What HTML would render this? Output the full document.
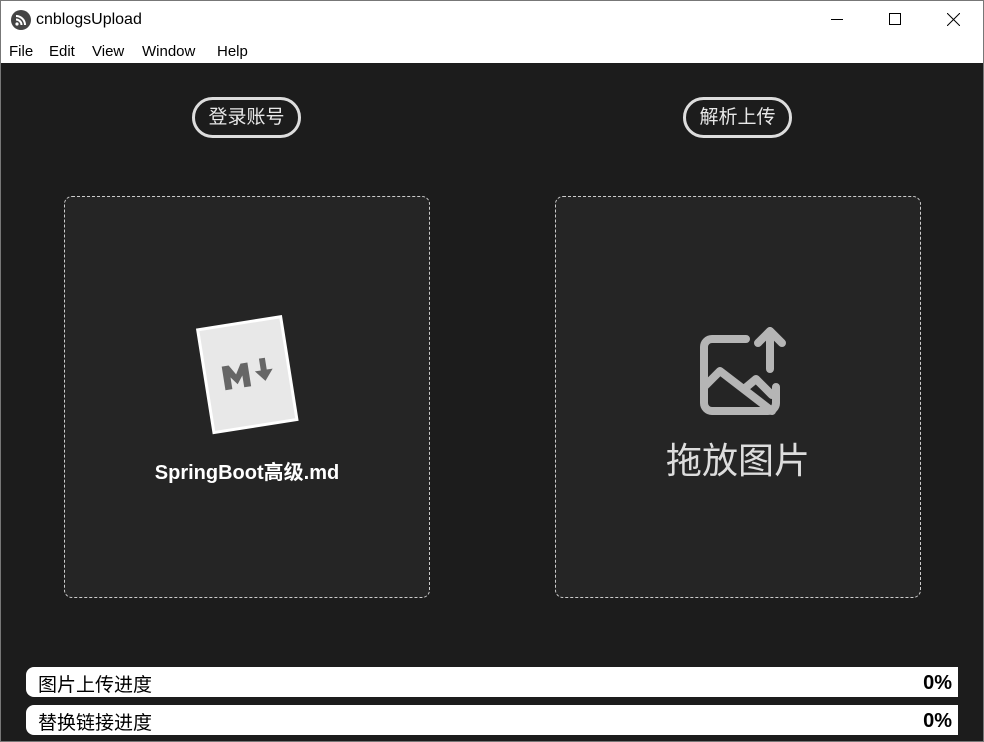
<!DOCTYPE html>
<html><head><meta charset="utf-8"><style>
*{margin:0;padding:0;box-sizing:border-box}
body{width:984px;height:742px;overflow:hidden;background:#1c1c1c;font-family:"Liberation Sans","Noto Sans CJK SC",sans-serif;position:relative}
.win{position:absolute;inset:0;border:1px solid #777}
.title{position:absolute;left:0;top:0;width:984px;height:38px;background:#fff;border:1px solid #777;border-bottom:none}
.title .t{position:absolute;left:35px;top:10px;font-size:16px;color:#000}
.menu{position:absolute;left:0;top:38px;width:984px;height:25px;background:#fff;border-left:1px solid #777;border-right:1px solid #777;font-size:15px}
.menu span{position:absolute;top:5px;color:#000}
.btn{position:absolute;top:97px;height:41px;border:3px solid #ddd;border-radius:21px;color:#e8e8e8;font-size:19px;line-height:35px;text-align:center}
.box{position:absolute;top:196px;width:366px;height:402px;background:#252525;border:1px dashed #ccc;border-radius:8px}
.bar{position:absolute;left:26px;width:932px;height:30px;background:#fff;border-radius:8px 0 0 8px;font-size:19px;color:#000}
.bar .l{position:absolute;left:12px;top:3px}
.bar .r{position:absolute;right:6px;top:5px;font-weight:bold;font-size:20px}
</style></head><body>
<div class="title">
<svg style="position:absolute;left:10px;top:9px" width="20" height="20" viewBox="0 0 20 20"><circle cx="10" cy="10" r="10" fill="#444"/><path d="M5 6a9 9 0 0 1 9 9M5 9.5a5.5 5.5 0 0 1 5.5 5.5" stroke="#fff" stroke-width="2" fill="none"/><circle cx="6" cy="14" r="1.6" fill="#fff"/></svg>
<span class="t">cnblogsUpload</span>
<svg style="position:absolute;left:830px;top:18px" width="12" height="2"><rect width="12" height="1" fill="#000"/></svg>
<svg style="position:absolute;left:888px;top:12px" width="12" height="12"><rect x=".5" y=".5" width="11" height="11" fill="none" stroke="#000"/></svg>
<svg style="position:absolute;left:946px;top:12px" width="13" height="13"><path d="M0 0L13 13M13 0L0 13" stroke="#000"/></svg>
</div>
<div class="menu"><span style="left:8px">File</span><span style="left:48px">Edit</span><span style="left:91px">View</span><span style="left:141px">Window</span><span style="left:216px">Help</span></div>
<div class="btn" style="left:192px;width:109px">登录账号</div>
<div class="btn" style="left:683px;width:109px">解析上传</div>
<div class="box" style="left:64px">
<svg style="position:absolute;left:128px;top:118px" width="110" height="122" viewBox="0 0 110 122">
<g transform="rotate(-9 52 58)"><rect x="12" y="8" width="84" height="104" fill="#e8e8e8" stroke="#fff" stroke-width="3"/>
<path d="M30 72V48h7l6 10 6-10h7v24h-7V60l-6 8-6-8v12z" fill="#666"/>
<path d="M68 46h6v12h6l-9 11-9-11h6z" fill="#666"/></g></svg>
<div style="position:absolute;left:0;width:100%;top:259px;text-align:center;color:#fff;font-size:20px;font-weight:600">SpringBoot高级.md</div>
</div>
<div class="box" style="left:555px">
<svg style="position:absolute;left:138px;top:126px" width="94" height="92" viewBox="0 0 94 92">
<g fill="none" stroke="#b5b5b5" stroke-width="8" stroke-linecap="round" stroke-linejoin="round">
<path d="M52 16H18a8 8 0 0 0-8 8v56a8 8 0 0 0 8 8h56a8 8 0 0 0 8-8V64"/>
<path d="M10 64l16-16 52 40"/><path d="M50 66l12-10 16 16"/>
<path d="M76 46V8M64 20l12-12 12 12"/></g></svg>
<div style="position:absolute;left:0;width:100%;top:235px;text-align:center;color:#ddd;font-size:36px">拖放图片</div>
</div>
<div class="bar" style="top:667px"><span class="l">图片上传进度</span><span class="r">0%</span></div>
<div class="bar" style="top:705px"><span class="l">替换链接进度</span><span class="r">0%</span></div>
<div class="win"></div>
</body></html>
